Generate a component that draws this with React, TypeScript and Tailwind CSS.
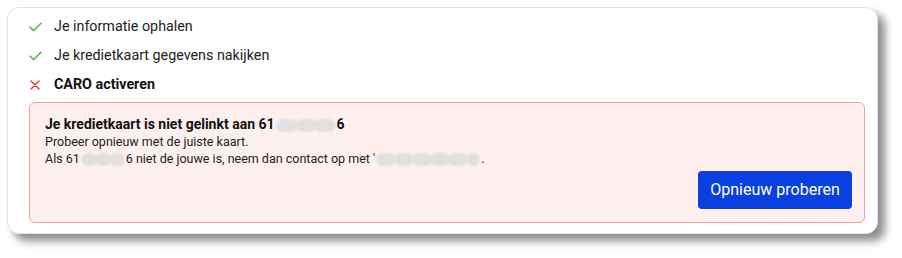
import React from "react";

function Blob({ segs }: { segs: number[] }) {
  return (
    <span className="inline-flex align-middle items-center mx-[1px] blur-[1.2px]">
      {segs.map((w, i) => (
        <span
          key={i}
          className="inline-block h-[13px] rounded-full bg-[#e3dfe0] -ml-[2px] first:ml-0"
          style={{ width: w }}
        />
      ))}
    </span>
  );
}

function Check() {
  return (
    <svg width="13" height="10" viewBox="0 0 13 10" fill="none">
      <path d="M1 5.2 L4.6 8.6 L12 1.2" stroke="#5cb85c" strokeWidth="1.6" strokeLinecap="round" strokeLinejoin="round" />
    </svg>
  );
}

function Cross() {
  return (
    <svg width="10" height="10" viewBox="0 0 10 10" fill="none">
      <path d="M1 1 L9 9 M9 1 L1 9" stroke="#e6443a" strokeWidth="1.6" strokeLinecap="round" />
    </svg>
  );
}

export default function App() {
  return (
    <div
      className="w-[902px] h-[258px] bg-white overflow-hidden"
      style={{ fontFamily: "Roboto, 'Liberation Sans', sans-serif" }}
    >
      <div className="ml-[7px] mt-[7px] w-[871px] h-[227px] bg-white rounded-xl border border-[#e3e3e3] shadow-[7px_7px_8px_rgba(0,0,0,0.45)] pl-[20px] pr-[12px] pt-[4px]">
        <div className="flex items-center h-[29px] text-[14.3px] text-[#222]">
          <span className="w-[26px] flex items-center pl-[1px]"><Check /></span>
          <span>Je informatie ophalen</span>
        </div>
        <div className="flex items-center h-[29px] text-[14.3px] text-[#222]">
          <span className="w-[26px] flex items-center pl-[1px]"><Check /></span>
          <span>Je kredietkaart gegevens nakijken</span>
        </div>
        <div className="flex items-center h-[29px] text-[14.3px] text-[#111] font-bold">
          <span className="w-[26px] flex items-center pl-[2px]"><Cross /></span>
          <span>CARO activeren</span>
        </div>
        <div className="ml-[1px] mt-[3px] w-[836px] h-[121px] rounded-md border border-[#f2a097] bg-[#fff0f0] pl-[15px] pr-[12px] pt-[12px] flex flex-col">
          <div className="text-[14px] leading-[18px] font-bold text-[#111]">
            Je kredietkaart is niet gelinkt aan 61<Blob segs={[22, 20, 22]} />6
          </div>
          <div className="text-[12.5px] leading-[17px] text-[#222]">
            Probeer opnieuw met de juiste kaart.
          </div>
          <div className="text-[12.5px] leading-[17px] text-[#222]">
            Als 61<Blob segs={[16, 16, 16]} />6 niet de jouwe is, neem dan contact op met '<Blob segs={[20, 20, 20, 20, 20, 14]} />.
          </div>
          <button className="self-end mt-[4px] w-[154px] h-[38px] rounded-[4px] bg-[#0a3fe0] text-white text-[16px]">
            Opnieuw proberen
          </button>
        </div>
      </div>
    </div>
  );
}
